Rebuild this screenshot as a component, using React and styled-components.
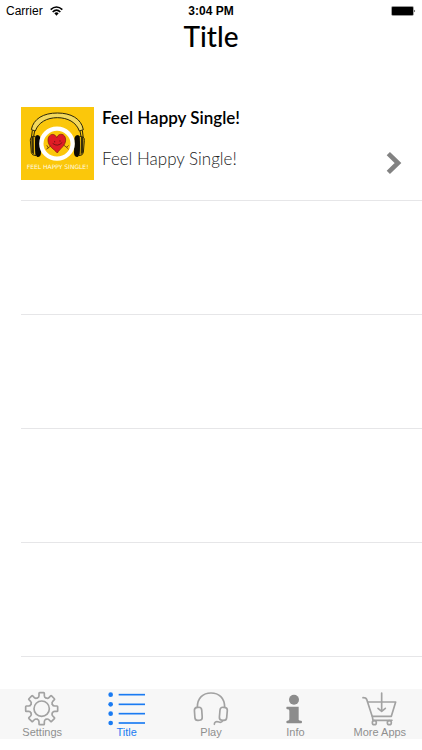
import React, { useState } from "react";
import styled, { createGlobalStyle } from "styled-components";

const theme = {
  tint: "#1a7bf2",
  icon: "#a2a2a2",
  label: "#8f8f8f",
  line: "#e6e6e8",
  bar: "#f7f7f7",
  rowHeight: 114
};

const GlobalStyle = createGlobalStyle`
  * {
    box-sizing: border-box;
  }
  body {
    margin: 0;
    background: #fff;
    color: #000;
    font-family: "Liberation Sans", Arial, sans-serif;
  }
`;

const Page = styled.div`
  min-height: 100vh;
  padding-bottom: 11px;
  display: flex;
  flex-direction: column;
`;

const StatusBar = styled.div`
  height: 22px;
  padding: 0 6px;
  display: grid;
  grid-template-columns: 1fr auto 1fr;
  align-items: center;
  font-size: 12px;
  line-height: 22px;
`;

const Carrier = styled.span`
  display: flex;
  align-items: center;
  gap: 7px;
`;

const Time = styled.span`
  font-weight: bold;
`;

const Battery = styled.svg`
  justify-self: end;
`;

const Heading = styled.h1`
  margin: 0;
  height: 65px;
  text-align: center;
  font-family: Lato, sans-serif;
  font-size: 28px;
  font-weight: 500;
  line-height: 28px;
`;

const List = styled.ul`
  flex: 1;
  margin: 0;
  padding: 0 0 32px 21px;
  list-style: none;
`;

const Row = styled.li`
  height: ${theme.rowHeight}px;
  border-bottom: 1px solid ${theme.line};
`;

const Track = styled.button`
  width: 100%;
  height: 100%;
  padding: 20px 20px 25px 0;
  border: 0;
  background: none;
  color: inherit;
  display: flex;
  align-items: flex-start;
  gap: 8px;
  text-align: left;
  cursor: pointer;
`;

const TrackText = styled.span`
  flex: 1;
  display: flex;
  flex-direction: column;
  gap: 20px;
  font-family: Lato, sans-serif;
  font-size: 17px;
  line-height: 21px;
`;

const TrackName = styled.span`
  font-weight: 600;
  overflow: hidden;
`;

const TrackDetail = styled.span`
  font-weight: 300;
  color: #222;
`;

const Arrow = styled.svg`
  align-self: flex-end;
`;

const TabBar = styled.nav`
  height: 50px;
  background: ${theme.bar};
  display: flex;
`;

const Tab = styled.button`
  flex: 1 1 0;
  min-width: 0;
  padding: 0;
  border: 0;
  background: none;
  color: ${props => (props.$active ? theme.tint : theme.label)};
  display: flex;
  flex-direction: column;
  align-items: center;
  font-family: inherit;
  font-size: 11px;
  line-height: 11px;
  white-space: nowrap;
  cursor: pointer;

  svg {
    color: ${props => (props.$active ? theme.tint : theme.icon)};
  }
`;

const WifiIcon = () => (
  <svg width="13" height="10" viewBox="0 0 39 30" fill="none" stroke="#000">
    <path d="M2 11 Q19.500 -5 37 11" strokeWidth="5" />
    <path d="M8 18 Q19.500 7 31 18" strokeWidth="5" />
    <path d="M13 22 Q19.500 16 26 22 L19.500 29 Z" fill="#000" stroke="none" />
  </svg>
);

const BatteryIcon = () => (
  <Battery width="25" height="10" viewBox="0 0 75 30">
    <rect x="1" y="1" width="67" height="28" rx="4" fill="#777" />
    <rect x="3" y="3" width="63" height="24" rx="2" />
    <path d="M70 11 Q75 15 70 19 Z" />
  </Battery>
);

const Cover = () => (
  <svg width="73" height="73" viewBox="0 0 219 219" role="img" aria-label="Cover">
    <rect width="219" height="219" fill="#fbc70b" />
    <g stroke="#2c2608" strokeWidth="3" strokeLinejoin="round">
      <path
        d="M31 68 C37 35 68 18 109 18 C150 18 181 35 187 68 L175 72 C166 46 140 32 109 32 C78 32 52 46 43 72 Z"
        fill="#f3d95c"
      />
      <path d="M34 70 L31 94 M41 72 L38 88 M184 70 L187 94 M177 72 L180 88" fill="none" />
      <path d="M43 88 Q27 87 28 100 L31 137 Q32 145 45 146 Z" fill="#e9b70d" />
      <path d="M175 88 Q191 87 190 100 L187 137 Q186 145 174 146 Z" fill="#e9b70d" />
    </g>
    <path d="M31 91 L38 88 L39 142 L32 137 Z M187 91 L180 88 L179 142 L186 137 Z" fill="#3a300a" />
    <g fill="#0c0a04">
      <path d="M47 84 Q58 84 59 97 L60 138 Q59 151 49 150 Q42 146 42 117 Q42 88 47 84 Z" />
      <path d="M172 84 Q161 84 160 97 L159 138 Q160 151 170 150 Q177 146 177 117 Q177 88 172 84 Z" />
    </g>
    <ellipse cx="108" cy="110" rx="47" ry="45" fill="#fbc70b" stroke="#fff" strokeWidth="13" />
    <path
      d="M107 92 C102 76 80 80 81 101 C82 119 99 126 109 138 C116 126 134 116 134 99 C134 79 113 76 107 92 Z"
      fill="#df1c25"
      stroke="#7a170f"
      strokeWidth="2"
    />
    <g fill="none" stroke="#4b100e" strokeWidth="2" strokeLinecap="round">
      <path d="M96 110 Q110 121 123 107 M101 103 V105 M117 101 V103" />
      <path d="M88 117 L82 123 L78 116 M82 123 L77 126 M129 115 L137 121 L142 116 M137 121 L142 126" />
    </g>
    <text
      x="110"
      y="186"
      textAnchor="middle"
      fill="#fffbe2"
      fontFamily="DejaVu Sans, sans-serif"
      fontSize="18"
    >
      FEEL HAPPY SINGLE!
    </text>
  </svg>
);

const ArrowIcon = () => (
  <Arrow width="17" height="24" viewBox="0 0 51 72" fill="none" stroke="#828282">
    <path d="M10 8 L39 36 L10 64" strokeWidth="14" />
  </Arrow>
);

const TabIcon = ({ children }) => (
  <svg
    width="40"
    height="38"
    viewBox="0 0 120 114"
    fill="none"
    stroke="currentColor"
    strokeWidth="5"
    strokeLinecap="round"
    strokeLinejoin="round"
    aria-hidden="true"
  >
    {children}
  </svg>
);

// outline of one gear tooth, pointing up from the middle of the icon
const TOOTH = "M46 27 Q51 25 51 20 V13 Q51 11 53 11 H65 Q67 11 67 13 V20 Q67 25 72 27";
const TEETH = [0, 45, 90, 135, 180, 225, 270, 315];

const SettingsIcon = () => (
  <TabIcon>
    {TEETH.map(angle => (
      <path key={angle} d={TOOTH} transform={`rotate(${angle} 59 59)`} />
    ))}
    <circle cx="59" cy="59" r="23" />
  </TabIcon>
);

const TitleIcon = () => (
  <TabIcon>
    {[17, 46, 74, 102].map(y => (
      <React.Fragment key={y}>
        <circle cx="11" cy={y} r="7" fill="currentColor" stroke="none" />
        <path d={`M35 ${y} H114`} strokeLinecap="butt" />
      </React.Fragment>
    ))}
  </TabIcon>
);

const PlayIcon = () => (
  <TabIcon>
    <path d="M19 55 C19 27 36 12 60 12 C84 12 101 27 101 55" />
    <rect x="11" y="55" width="22" height="39" rx="9" transform="rotate(-4 22 75)" />
    <rect x="86" y="55" width="22" height="39" rx="9" transform="rotate(5 97 75)" />
    <path d="M96 94 Q91 102 84 99 Q70 95 70 106" />
  </TabIcon>
);

const InfoIcon = () => (
  <TabIcon>
    <g fill="#8c8c8c" stroke="none">
      <circle cx="57" cy="32" r="15" />
      <path d="M36 53 H71 V92 Q72 95 78 95 Q81 95 81 99 T78 103 H37 Q34 103 34 99 T37 95 Q43 95 43 91 V65 Q43 61 37 61 Q34 61 34 57 T36 53 Z" />
    </g>
  </TabIcon>
);

const MoreAppsIcon = () => (
  <TabIcon>
    <path d="M9 26 Q18 26 20 31 L37 83 L39 94 H96" />
    <path d="M23 39 H107 L94 82 H37" />
    <circle cx="43" cy="101" r="6" />
    <circle cx="88" cy="101" r="6" />
    <path d="M65 12 V66 M54 58 L65 67 L76 58" />
  </TabIcon>
);

const TABS = [
  { name: "Settings", Icon: SettingsIcon },
  { name: "Title", Icon: TitleIcon },
  { name: "Play", Icon: PlayIcon },
  { name: "Info", Icon: InfoIcon },
  { name: "More Apps", Icon: MoreAppsIcon }
];

const App = () => {
  const [active, setActive] = useState("Title");

  return (
    <Page>
      <GlobalStyle />
      <StatusBar>
        <Carrier>
          Carrier <WifiIcon />
        </Carrier>
        <Time>3:04 PM</Time>
        <BatteryIcon />
      </StatusBar>
      <Heading>Title</Heading>
      <List>
        <Row>
          <Track>
            <Cover />
            <TrackText>
              <TrackName>Feel Happy Single!</TrackName>
              <TrackDetail>Feel Happy Single!</TrackDetail>
            </TrackText>
            <ArrowIcon />
          </Track>
        </Row>
        <Row />
        <Row />
        <Row />
        <Row />
      </List>
      <TabBar>
        {TABS.map(({ name, Icon }) => (
          <Tab key={name} $active={name === active} onClick={() => setActive(name)}>
            <Icon />
            {name}
          </Tab>
        ))}
      </TabBar>
    </Page>
  );
};

export default App;
